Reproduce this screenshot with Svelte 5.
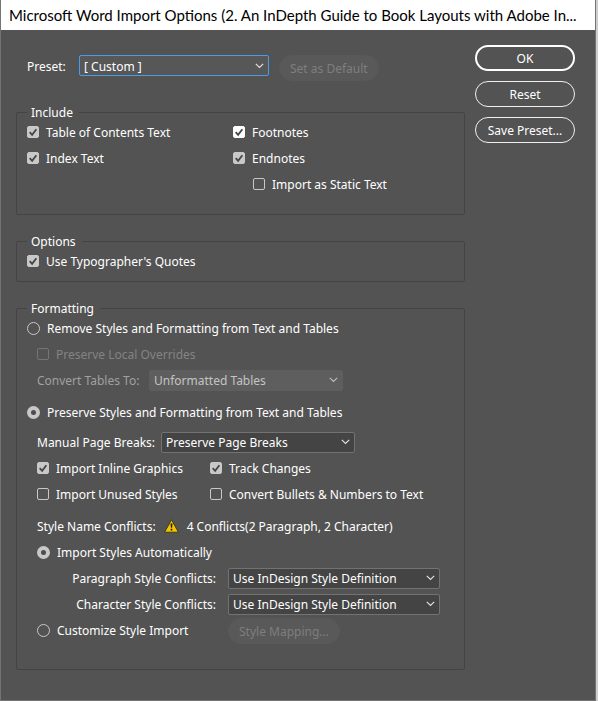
<script>
  let preset = $state('[ Custom ]');
  let tableMode = $state('Unformatted Tables');
  let pageBreaks = $state('Preserve Page Breaks');
  let paragraphRule = $state('Use InDesign Style Definition');
  let characterRule = $state('Use InDesign Style Definition');
  let source = $state('preserve');
  let styleImport = $state('auto');
  let flags = $state({
    toc: true,
    index: true,
    footnotes: true,
    endnotes: true,
    staticText: false,
    quotes: true,
    overrides: false,
    graphics: true,
    unused: false,
    track: true,
    bullets: false
  });
</script>

{#snippet check(key, text, disabled = false, active = false)}
  <label class="choice" class:disabled class:active>
    <span class="box">
      <input type="checkbox" bind:checked={flags[key]} {disabled} />
      {#if flags[key]}
        <svg viewBox="0 0 12 12" aria-hidden="true"><path d="M2.7 6.2 5.1 8.8 9.4 3.2" /></svg>
      {/if}
    </span>
    <span class="text">{text}</span>
  </label>
{/snippet}

{#snippet chevron()}
  <svg class="chevron" viewBox="0 0 9 6" aria-hidden="true"><path d="M0.8 0.9 4.5 4.4 8.2 0.9" /></svg>
{/snippet}

<div class="desktop">
  <div class="dialog" role="dialog" aria-labelledby="title">
    <h1 id="title">Microsoft Word Import Options (2. An InDepth Guide to Book Layouts with Adobe In...</h1>
    <div class="body">
      <main>
        <div class="preset">
          <label for="preset">Preset:</label>
          <span class="select focus">
            <select id="preset" bind:value={preset}><option>[ Custom ]</option></select>
            {@render chevron()}
          </span>
          <button class="muted" disabled>Set as Default</button>
        </div>

        <fieldset class="include">
          <legend>Include</legend>
          <div class="columns">
            <div class="stack">
              {@render check('toc', 'Table of Contents Text')}
              {@render check('index', 'Index Text')}
            </div>
            <div class="stack">
              {@render check('footnotes', 'Footnotes', false, true)}
              {@render check('endnotes', 'Endnotes')}
              <div class="sub">{@render check('staticText', 'Import as Static Text')}</div>
            </div>
          </div>
        </fieldset>

        <fieldset class="options">
          <legend>Options</legend>
          {@render check('quotes', "Use Typographer's Quotes")}
        </fieldset>

        <fieldset class="formatting">
          <legend>Formatting</legend>
          <div class="stack">
            <label class="choice">
              <input type="radio" name="source" value="remove" bind:group={source} />
              <span class="text">Remove Styles and Formatting from Text and Tables</span>
            </label>
            <div class="stack nested">
              {@render check('overrides', 'Preserve Local Overrides', true)}
              <div class="row">
                <label class="text dim" for="tables">Convert Tables To:</label>
                <span class="select off">
                  <select id="tables" bind:value={tableMode} disabled><option>Unformatted Tables</option></select>
                  {@render chevron()}
                </span>
              </div>
            </div>
            <label class="choice spaced">
              <input type="radio" name="source" value="preserve" bind:group={source} />
              <span class="text">Preserve Styles and Formatting from Text and Tables</span>
            </label>
            <div class="stack nested second">
              <div class="row">
                <label class="text" for="breaks">Manual Page Breaks:</label>
                <span class="select">
                  <select id="breaks" bind:value={pageBreaks}><option>Preserve Page Breaks</option></select>
                  {@render chevron()}
                </span>
              </div>
              <div class="pair">
                {@render check('graphics', 'Import Inline Graphics')}
                {@render check('track', 'Track Changes')}
                {@render check('unused', 'Import Unused Styles')}
                {@render check('bullets', 'Convert Bullets & Numbers to Text')}
              </div>
              <div class="row conflicts spaced">
                <span class="text">Style Name Conflicts:</span>
                <svg class="warn" viewBox="0 0 15 14" aria-hidden="true">
                  <path class="tri" d="M7.5 0.8 14.4 13.2H0.6Z" />
                  <path class="bang" d="M6.5 4.5h2l-.4 4.2H6.9ZM6.7 9.8h1.6v1.6H6.7Z" />
                </svg>
                <span class="text">4 Conflicts(2 Paragraph, 2 Character)</span>
              </div>
              <label class="choice">
                <input type="radio" name="style" value="auto" bind:group={styleImport} />
                <span class="text">Import Styles Automatically</span>
              </label>
              <div class="rule">
                <label class="text" for="para">Paragraph Style Conflicts:</label>
                <span class="select wide">
                  <select id="para" bind:value={paragraphRule}><option>Use InDesign Style Definition</option></select>
                  {@render chevron()}
                </span>
              </div>
              <div class="rule">
                <label class="text" for="char">Character Style Conflicts:</label>
                <span class="select wide">
                  <select id="char" bind:value={characterRule}><option>Use InDesign Style Definition</option></select>
                  {@render chevron()}
                </span>
              </div>
              <div class="rule last">
                <label class="choice">
                  <input type="radio" name="style" value="custom" bind:group={styleImport} />
                  <span class="text">Customize Style Import</span>
                </label>
                <button class="muted" disabled>Style Mapping...</button>
              </div>
            </div>
          </div>
        </fieldset>
      </main>

      <aside>
        <button class="primary">OK</button>
        <button>Reset</button>
        <button>Save Preset...</button>
      </aside>
    </div>
  </div>
</div>

<style>
  :global(body) {
    margin: 0;
  }
  .desktop {
    box-sizing: border-box;
    min-height: 100vh;
    display: flex;
    padding-right: 2px;
    background: #cdcdcd;
  }
  .dialog {
    box-sizing: border-box;
    flex: 1;
    min-width: 0;
    border: solid #747474;
    border-width: 0 1px 1px;
    background: #535353;
    color: #fff;
    font: 12px/16px 'Noto Sans', sans-serif;
  }
  h1 {
    margin: 0;
    padding: 0 8px;
    background: #fff;
    color: #000;
    font: 15px/30px Lato, sans-serif;
    white-space: nowrap;
    overflow: hidden;
    text-overflow: ellipsis;
  }
  .body {
    display: flex;
    gap: 10px;
    padding: 15px 20px 16px 15px;
  }
  main {
    flex: 1;
    min-width: 0;
    display: flex;
    flex-direction: column;
    gap: 18px;
    padding-top: 10px;
  }
  aside {
    width: 100px;
    display: flex;
    flex-direction: column;
    gap: 10px;
  }
  button {
    box-sizing: border-box;
    height: 26px;
    padding: 2px 10px 0;
    border: 1px solid #f0f0f0;
    border-radius: 13px;
    background: transparent;
    color: #fff;
    font: inherit;
    white-space: nowrap;
  }
  aside button {
    padding: 1px 0 0;
  }
  .primary {
    border: 2px solid #fff;
  }
  .muted {
    border-color: #595959;
    background: #595959;
    color: #7e7e7e;
  }
  .preset {
    display: flex;
    align-items: flex-start;
    height: 31px;
    padding-left: 11px;
  }
  .preset label {
    width: 52px;
    line-height: 24px;
  }
  .preset .muted {
    margin-left: 10px;
  }
  .select {
    display: grid;
    align-items: center;
    width: 194px;
  }
  .select select {
    grid-area: 1 / 1;
    appearance: none;
    box-sizing: border-box;
    width: 100%;
    height: 21px;
    padding: 2px 20px 0 4px;
    border: 1px solid #727272;
    border-radius: 2px;
    background: #444;
    color: #fff;
    font: inherit;
    opacity: 1;
  }
  .select.focus {
    width: 190px;
  }
  .select.focus select {
    border-color: #4a9cea;
    background: #575757;
  }
  .select.off select {
    border-color: #5e5e5e;
    background: #5e5e5e;
    color: #c4c4c4;
  }
  .select.wide {
    width: 212px;
  }
  .chevron {
    grid-area: 1 / 1;
    justify-self: end;
    width: 9px;
    height: 6px;
    margin-right: 5px;
    fill: none;
    stroke: #e2e2e2;
    stroke-width: 1.2;
    pointer-events: none;
  }
  .off .chevron {
    stroke: #bcbcbc;
  }
  fieldset {
    min-width: 0;
    margin: 0;
    padding: 0 10px;
    border: 1px solid #444;
    border-radius: 2px;
  }
  legend {
    height: 16px;
    padding: 0 6px 0 4px;
    line-height: 18px;
  }
  .include {
    padding-bottom: 18px;
  }
  .options {
    padding-bottom: 8px;
  }
  .formatting {
    padding-bottom: 27px;
  }
  .columns {
    display: grid;
    grid-template-columns: 206px 1fr;
  }
  .stack {
    display: flex;
    flex-direction: column;
    gap: 2px;
  }
  .sub {
    padding-left: 20px;
  }
  .nested {
    padding-left: 10px;
  }
  .second {
    padding-top: 4px;
  }
  .spaced {
    margin-top: 6px;
  }
  .text {
    padding-top: 2px;
  }
  .choice {
    display: flex;
    align-items: center;
    gap: 7px;
    height: 24px;
    white-space: nowrap;
  }
  .row {
    display: flex;
    align-items: center;
    gap: 6px;
    height: 24px;
  }
  .pair {
    display: grid;
    grid-template-columns: 173px 1fr;
    row-gap: 2px;
  }
  .rule {
    display: grid;
    grid-template-columns: 179px auto;
    justify-content: start;
    align-items: center;
    column-gap: 12px;
    height: 24px;
  }
  .rule > .text {
    text-align: right;
  }
  .last {
    align-items: start;
  }
  .conflicts {
    gap: 8px;
  }
  .box {
    display: grid;
    width: 12px;
    height: 12px;
  }
  .box > * {
    grid-area: 1 / 1;
  }
  input {
    appearance: none;
    box-sizing: border-box;
    width: 12px;
    height: 12px;
    margin: 0;
    border: 1px solid #c8c8c8;
    border-radius: 2px;
    background: transparent;
  }
  input[type='checkbox']:checked {
    background: #c8c8c8;
  }
  .active input[type='checkbox'] {
    border-color: #fff;
    background: #fff;
  }
  input[type='radio'] {
    width: 13px;
    height: 13px;
    border-radius: 50%;
  }
  input[type='radio']:checked {
    border: 4px solid #c8c8c8;
    background: #4c4c4c;
  }
  .box svg {
    width: 12px;
    height: 12px;
    fill: none;
    stroke: #454545;
    stroke-width: 1.8;
    pointer-events: none;
  }
  .disabled {
    color: #838383;
  }
  .dim {
    width: 106px;
    color: #a0a0a0;
  }
  .disabled input {
    border-color: #757575;
  }
  .warn {
    width: 15px;
    height: 14px;
  }
  .tri {
    fill: #f5c400;
    stroke: #2d2a1c;
    stroke-width: 0.8;
    stroke-linejoin: round;
  }
  .bang {
    fill: #1c1c1c;
  }
</style>
